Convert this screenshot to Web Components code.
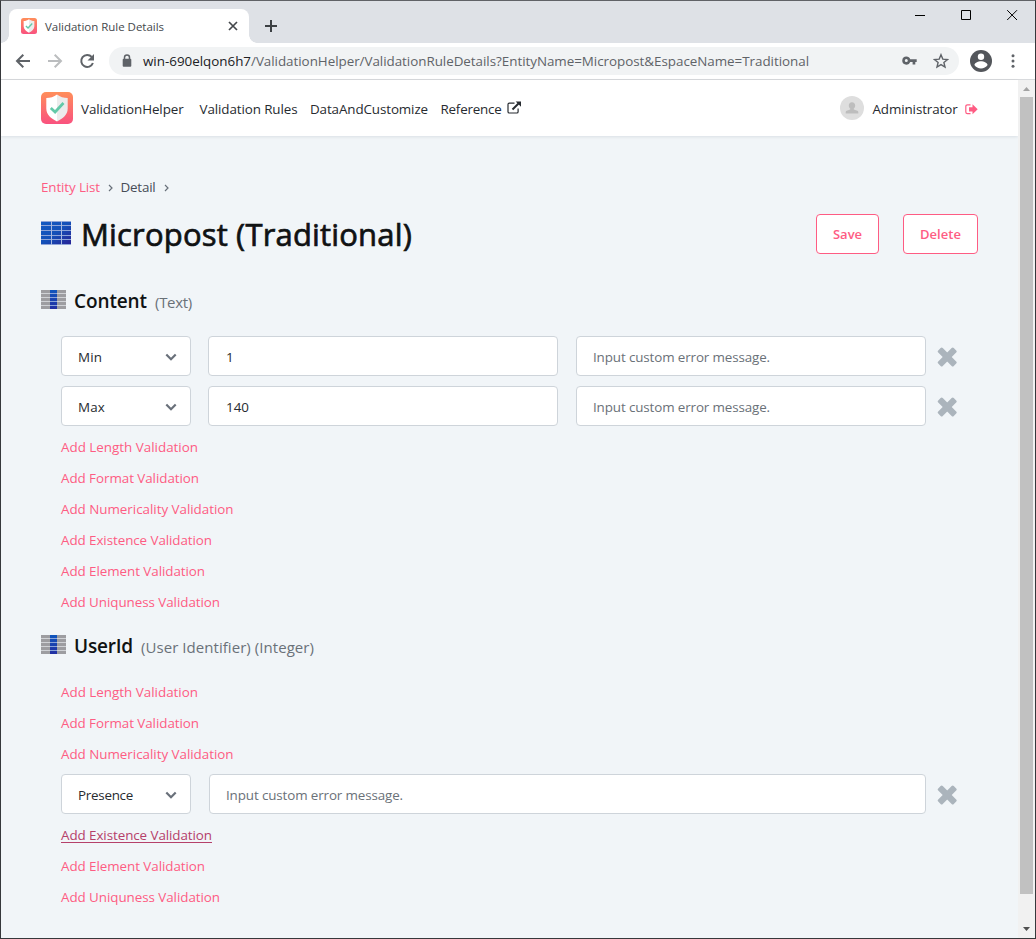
<!DOCTYPE html>
<html lang="en">
<head>
<meta charset="utf-8">
<title>Validation Rule Details</title>
<style>
html,body{margin:0;height:939px;overflow:hidden}
body{font-family:"Open Sans","Noto Sans",sans-serif;font-size:13.4px;color:#272b30}
</style>
</head>
<body>
<browser-window>
  <app-header></app-header>
  <app-page>
    <bread-crumbs></bread-crumbs>
    <entity-title></entity-title>
    <attr-section>
      <ui-text slot="name" w="73">Content</ui-text>
      <ui-text slot="type" w="37">(Text)</ui-text>
      <rule-row><ui-text slot="kind" w="24">Min</ui-text><ui-text slot="value" w="7">1</ui-text></rule-row>
      <rule-row><ui-text slot="kind" w="27">Max</ui-text><ui-text slot="value" w="23">140</ui-text></rule-row>
      <add-link><ui-text w="137">Add Length Validation</ui-text></add-link>
      <add-link><ui-text w="138">Add Format Validation</ui-text></add-link>
      <add-link><ui-text w="172.500">Add Numericality Validation</ui-text></add-link>
      <add-link><ui-text w="151">Add Existence Validation</ui-text></add-link>
      <add-link><ui-text w="144">Add Element Validation</ui-text></add-link>
      <add-link><ui-text w="159">Add Uniquness Validation</ui-text></add-link>
    </attr-section>
    <attr-section>
      <ui-text slot="name" w="59">UserId</ui-text>
      <ui-text slot="type" w="173">(User Identifier) (Integer)</ui-text>
      <add-link><ui-text w="137">Add Length Validation</ui-text></add-link>
      <add-link><ui-text w="138">Add Format Validation</ui-text></add-link>
      <add-link><ui-text w="172.500">Add Numericality Validation</ui-text></add-link>
      <rule-row wide><ui-text slot="kind" w="55">Presence</ui-text></rule-row>
      <add-link active><ui-text w="151">Add Existence Validation</ui-text></add-link>
      <add-link><ui-text w="144">Add Element Validation</ui-text></add-link>
      <add-link><ui-text w="159">Add Uniquness Validation</ui-text></add-link>
    </attr-section>
  </app-page>
</browser-window>
<script>
const define = (name, html, setup) => {
  const template = document.createElement('template');
  template.innerHTML = html;
  customElements.define(name, class extends HTMLElement {
    constructor() {
      super();
      this.attachShadow({mode: 'open'}).append(template.content.cloneNode(true));
    }
    connectedCallback() { if (setup) setup(this); }
  });
};

/* A single line of text whose tracking is adjusted to a given width. */
define('ui-text', `<style>:host{display:block;flex:none;width:max-content;white-space:pre;line-height:20px}</style><slot></slot>`, el => {
  queueMicrotask(() => {
    const target = +el.getAttribute('w');
    if (!target) return;
    el.style.letterSpacing = '0';
    const natural = el.getBoundingClientRect().width;
    el.style.letterSpacing = (target - natural) / el.textContent.length + 'px';
  });
});

define('shield-logo', `<style>:host{display:block;flex:none;width:32px;height:32px}svg{display:block;width:100%;height:100%}</style>
<svg viewBox="0 0 32 32"><defs><linearGradient id="g" x2="0" y2="1"><stop stop-color="#ff8e5a"/><stop offset="1" stop-color="#f9527f"/></linearGradient></defs>
<rect width="32" height="32" rx="5" fill="url(#g)"/>
<path d="M16 2.500C13 5 9 6 5.300 6v10.500c0 6 4.700 10 10.700 13z" fill="#fff"/><path d="M16 2.500C19 5 23 6 26.700 6v10.500c0 6-4.700 10-10.700 13z" fill="#ececec"/>
<path d="M9.800 16l4.300 4 8.400-9" fill="none" stroke="#63c9a8" stroke-width="2.700"/></svg>`);

define('tab-bar', `<style>
:host{display:flex;height:42px;background:#dee1e6;box-sizing:border-box;padding-left:8px}
.tab{position:relative;margin-top:8px;width:240px;height:34px;background:#fff;border-radius:8px 8px 0 0;display:flex;align-items:center;box-sizing:border-box;padding:0 11px 0 12px;color:#45484c;font-size:11.500px}
.tab:before,.tab:after{content:"";position:absolute;bottom:0;width:8px;height:8px}
.tab:before{left:-8px;background:radial-gradient(circle at 0 0,transparent 7.500px,#fff 8px)}
.tab:after{right:-8px;background:radial-gradient(circle at 100% 0,transparent 7.500px,#fff 8px)}
.tab ui-text{margin-top:2px}
shield-logo{width:16px;height:16px;margin-right:8px}.x{margin-left:auto}
.plus{margin:18px 0 0 15px}.win{margin:8px 17px 0 auto}
svg{display:block}
</style><div class="tab"><shield-logo></shield-logo><ui-text w="119">Validation Rule Details</ui-text>
<svg class="x" width="10" height="10" stroke="#45484c" stroke-width="1.700"><path d="M1 1l8 8M9 1L1 9"/></svg></div>
<svg class="plus" width="14" height="14" stroke="#3c4043" stroke-width="2"><path d="M7 1v12M1 7h12"/></svg>
<svg class="win" width="104" height="14" fill="none" stroke="#000"><path d="M1 6.500h10M47.500 1.500h9v9h-9zM93.200 1.200l9.800 9.800M103 1.200l-9.800 9.800"/></svg>`);

define('address-bar', `<style>
:host{display:flex;align-items:center;height:36px;background:#fff;border-bottom:1px solid #d8dadd;box-sizing:content-box;color:#5f6368;font-size:13.400px}
svg{display:block;flex:none}.nav{margin-left:14px}
.omni{display:flex;align-items:center;margin-left:14px;width:850px;height:28px;border-radius:14px;background:#f1f3f4;box-sizing:border-box;padding:0 10px 0 12px}
.lock{margin-right:10px}.host{color:#202124}.key{margin-left:auto}.star{margin-left:16px}.user{margin-left:11px}.dots{margin-left:17px}
</style><svg class="nav" width="80" height="18" fill="none" stroke-width="2">
<path stroke="#5f6368" d="M15 9H2M8.300 2.700L2 9l6.300 6.300"/><path stroke="#bbbdbf" d="M33 9h13M39.700 2.700L46 9l-6.300 6.300"/>
<path stroke="#5f6368" d="M76.700 4.900A6 6 0 1 0 77.900 11"/><path fill="#5f6368" d="M79 2v6.500h-6.500z"/></svg>
<div class="omni"><svg class="lock" width="12" height="16" viewBox="0 0 12 16"><path d="M3.500 7V4.500a2.500 2.500 0 0 1 5 0V7" fill="none" stroke="#5f6368" stroke-width="1.500"/><rect x="1.700" y="5.800" width="8.600" height="8" rx="1" fill="#5f6368"/></svg>
<ui-text class="host" w="108">win-690elqon6h7</ui-text><ui-text w="558">/ValidationHelper/ValidationRuleDetails?EntityName=Micropost&amp;EspaceName=Traditional</ui-text>
<svg class="key" width="15" height="10"><path fill="#5f6368" fill-rule="evenodd" d="M4.300.5a4 4 0 0 1 3.900 2.800H14.700V6h-1.400v2.600h-2.700V6H8.200A4.100 4.100 0 1 1 4.300.5zm0 2.600a1.500 1.500 0 1 0 0 3 1.500 1.500 0 0 0 0-3z"/></svg>
<svg class="star" width="16" height="16"><path fill="none" stroke="#5f6368" stroke-width="1.400" d="M8 1.700l1.800 4.400 4.700.4-3.600 3 1.100 4.600L8 11.600l-4 2.500 1.100-4.600-3.600-3 4.700-.4z"/></svg></div>
<svg class="user" width="22" height="22"><circle cx="11" cy="11" r="11" fill="#53565b"/><circle cx="11" cy="6.700" r="3.200" fill="#fff"/><path d="M4.400 15c.6-2.700 4-3.800 6.600-3.800s6 1.100 6.600 3.800a8 8 0 0 1-13.200 0z" fill="#fff"/></svg>
<svg class="dots" width="6" height="16" fill="#5f6368"><circle cx="4" cy="2.800" r="1.500"/><circle cx="4" cy="8" r="1.500"/><circle cx="4" cy="13.200" r="1.500"/></svg>`);

define('scroll-bar', `<style>
:host{display:flex;flex-direction:column;align-items:center;width:17px;background:#f1f1f1;box-sizing:border-box;padding-right:1px}
svg{display:block;flex:none}.thumb{width:13px;height:797px;background:#c1c1c1;margin-left:1px}.down{margin-top:auto}
</style><svg width="16" height="17"><path d="M5 11h7L8.500 7z" fill="#a3a3a3"/></svg><div class="thumb"></div><svg class="down" width="16" height="16"><path d="M5 5h7L8.500 9z" fill="#505050"/></svg>`);

define('browser-window', `<style>
:host{display:flex;flex-direction:column;width:1036px;height:939px;box-sizing:border-box;border:1px solid #36383b;border-top-color:#606266;background:#f1f5f8}
.view{display:flex;flex:1;min-height:0}.doc{flex:1;min-width:0}
</style><tab-bar></tab-bar><address-bar></address-bar><div class="view"><div class="doc"><slot></slot></div><scroll-bar></scroll-bar></div>`);

define('app-header', `<style>
:host{display:flex;align-items:center;height:56px;background:#fff;padding:0 40px;box-shadow:0 1px 3px #0b1f3018;box-sizing:border-box;color:#272b30}
ui-text{margin-top:2px}svg{display:block;flex:none}
.n0{margin-left:8px}.n1{margin-left:16px}.n2{margin-left:12.500px}.ext{margin-left:5px}.who{margin-left:auto}.n3{margin-left:8.500px}.out{margin:2px 0 0 7.500px}
</style><shield-logo></shield-logo><ui-text class="n0" w="102.500">ValidationHelper</ui-text><ui-text class="n1" w="98">Validation Rules</ui-text><ui-text class="n2" w="118">DataAndCustomize</ui-text><ui-text class="n2" w="61">Reference</ui-text>
<svg class="ext" width="15" height="14"><path fill="none" stroke="#272b30" stroke-width="1.200" d="M7.500 2.200H2.300Q1 2.200 1 3.500v7.200Q1 12 2.300 12h7.500q1.300 0 1.300-1.300V7.500"/><path d="M5.500 8.500L11.500 2.500" stroke="#272b30" stroke-width="2"/><path d="M8.700.500H14v5.200z" fill="#272b30"/></svg>
<svg class="who" width="24" height="24"><circle cx="12" cy="12" r="12" fill="#dedede"/><path fill="#bdbdbd" d="M12 6.200c2 0 3.200 1.400 3.200 3.200 0 1.400-.6 2.500-1.400 3.200v1l3.500 1.200q1 .4 1 1.500v1.200H5.700v-1.200q0-1.100 1-1.500l3.500-1.200v-1C9.400 11.900 8.800 10.800 8.800 9.400c0-1.800 1.200-3.200 3.200-3.200z"/></svg>
<ui-text class="n3" w="85">Administrator</ui-text><svg class="out" width="13" height="11"><path d="M5.500 .8H2.500Q.8.8.8 2.500v5.500Q.8 9.700 2.500 9.700h3" fill="none" stroke="#fe5c83" stroke-width="1.200"/><path d="M4 3.200h3.500V.300L12.700 5.300 7.500 10.300V7.400H4z" fill="#fe5c83"/></svg>`);

define('app-page', `<style>:host{display:block;padding:41px 40px 0}</style><slot></slot>`);

define('bread-crumbs', `<style>:host{display:flex;align-items:center;height:20px;color:#464c57}.link{color:#fe5c83}
svg{display:block;margin:2px 7.500px 0 8px}</style><ui-text class="link" w="59">Entity List</ui-text>
<svg width="5" height="8" fill="none" stroke="#68707a" stroke-width="1.200"><path d="M1 1l3 3-3 3"/></svg><ui-text w="35">Detail</ui-text>
<svg width="5" height="8" fill="none" stroke="#68707a" stroke-width="1.200"><path d="M1 1l3 3-3 3"/></svg>`);

define('out-button', `<style>:host{display:flex;align-items:center;justify-content:center;height:40px;box-sizing:border-box;border:1px solid #fe5c83;border-radius:4px;background:#fff;color:#fe5c83;font-weight:600;font-size:13px}</style><slot></slot>`);

define('table-icon', `<style>:host{display:block;flex:none}svg{display:block}</style>
<svg width="30" height="24" viewBox="0 0 30 24"><defs><linearGradient id="b" x2="1" y2="1"><stop stop-color="#125ac2"/><stop offset=".5" stop-color="#1450b8"/><stop offset="1" stop-color="#292094"/></linearGradient></defs>
<rect width="30" height="24" fill="url(#b)"/><path d="M0 .500h30M0 4.500h30M0 9.500h30M0 14.500h30M0 18.500h30M0 23.500h30" stroke="#8fa5d8"/><path d="M10.500 0v24M20.500 0v24" stroke="#a9b9e0"/></svg>`);

define('column-icon', `<style>:host{display:block;flex:none}svg{display:block}</style>
<svg width="25" height="19"><defs><linearGradient id="b" x2="0" y2="1"><stop stop-color="#1056bd"/><stop offset="1" stop-color="#222fa2"/></linearGradient></defs>
<rect width="25" height="19" fill="#9d9da1"/><rect x="9" width="7" height="19" fill="url(#b)"/><path d="M0 3.500h9M0 7.500h9M0 11.500h9M0 15.500h9M16 3.500h9M16 7.500h9M16 11.500h9M16 15.500h9" stroke="#d0d2d6"/><path d="M9 3.500h7M9 7.500h7M9 11.500h7M9 15.500h7" stroke="#8aa4da"/></svg>`);

define('entity-title', `<style>:host{display:flex;align-items:center;height:40px;margin-top:17px;color:#101213}
.t{font-size:31px;font-weight:400;-webkit-text-stroke:.7px #101213;margin-left:10px;line-height:40px}table-icon{margin-top:-2px}.save{width:63px;margin-left:auto}.del{width:75px;margin-left:24px}</style>
<table-icon></table-icon><ui-text class="t" w="331">Micropost (Traditional)</ui-text>
<out-button class="save"><ui-text w="29">Save</ui-text></out-button><out-button class="del"><ui-text w="41">Delete</ui-text></out-button>`);

define('attr-section', `<style>:host{display:block;padding-top:32px}
:host(:last-of-type){padding-top:14px}
header{display:flex;align-items:center;height:30px}column-icon{margin-top:-3px}
::slotted([slot=name]){margin-left:8px;font-size:19px;font-weight:600;color:#101213}
::slotted([slot=type]){margin:2px 0 0 8px;font-size:15px;color:#6a7178}
.rules{padding:15px 0 0 20px;display:flex;flex-direction:column;align-items:flex-start}
</style><header><column-icon></column-icon><slot name="name"></slot><slot name="type"></slot></header><div class="rules"><slot></slot></div>`);

define('add-link', `<style>:host{display:flex;align-items:center;height:31px;color:#fe5c83}
:host([active]){color:#b5406a}:host([active]) ::slotted(*){text-decoration:underline;text-underline-offset:2px}</style><slot></slot>`);

define('rule-row', `<style>
:host{display:flex;align-items:center;height:40px;margin:5px 0}
.box{display:flex;align-items:center;height:40px;border:1px solid #ced4da;border-radius:4px;background:#fff;box-sizing:border-box;padding:2px 13px 0 16px}
.kind{width:130px;justify-content:space-between}.value{width:350px;margin-left:17px;padding-left:17px}
.msg{width:350px;margin-left:18px;color:#6a7178}:host([wide]) .value{display:none}:host([wide]) .msg{width:717px}
svg{display:block;flex:none}.x{margin:2px 0 0 11px}
</style><div class="box kind"><slot name="kind"></slot><svg width="12" height="8"><path d="M1.300 1.500L6 6.200l4.700-4.700" fill="none" stroke="#69707a" stroke-width="2.200"/></svg></div>
<div class="box value"><slot name="value"></slot></div><div class="box msg"><ui-text w="177">Input custom error message.</ui-text></div>
<svg class="x" width="21" height="20" fill="#abb4bc"><g transform="translate(10.200 10) rotate(45)"><rect x="-11" y="-3.200" width="22" height="6.400" rx="1.500"/><rect x="-3.200" y="-11" width="6.400" height="22" rx="1.500"/></g></svg>`);
</script>
</body>
</html>
